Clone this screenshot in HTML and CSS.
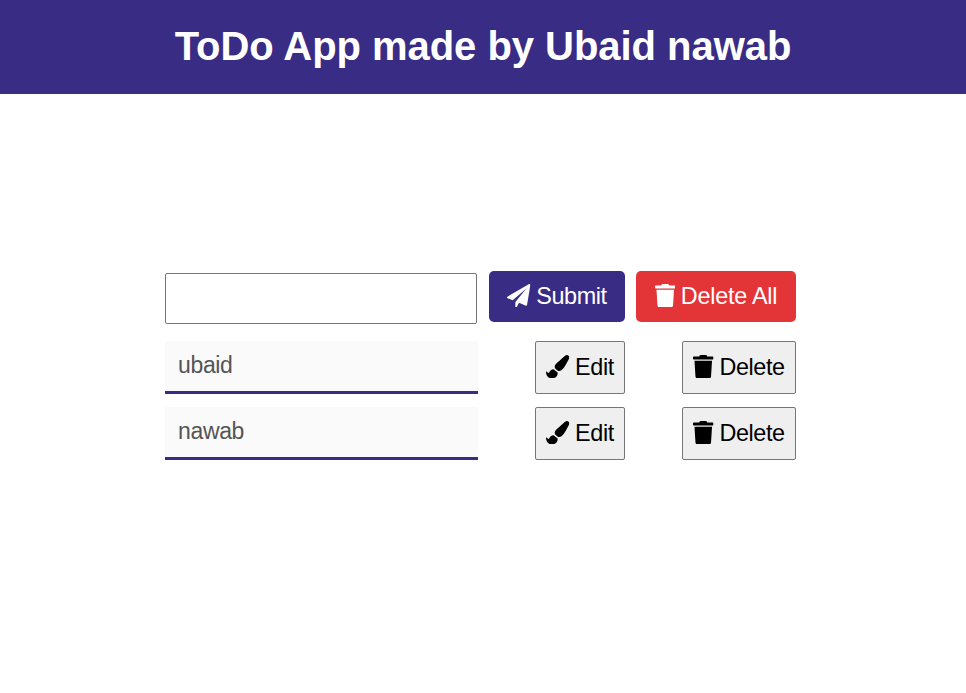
FILE: index.html
```html
<!DOCTYPE html>
<html lang="en">
<head>
<meta charset="utf-8">
<title>ToDo App</title>
<link rel="stylesheet" href="styles.css">
</head>
<body>
<svg class="sprite" aria-hidden="true">
  <symbol id="trash" viewBox="0 0 448 512"><path d="M432 32H312l-9.400-18.700A24 24 0 0 0 281.100 0H166.800a23.720 23.720 0 0 0-21.400 13.300L136 32H16A16 16 0 0 0 0 48v32a16 16 0 0 0 16 16h416a16 16 0 0 0 16-16V48a16 16 0 0 0-16-16zM53.200 467a48 48 0 0 0 47.900 45h245.800a48 48 0 0 0 47.900-45L416 128H32z"/></symbol>
  <symbol id="plane" viewBox="0 0 1792 1792"><path d="M1764 11q33 24 27 64l-256 1536q-5 29-32 45-14 8-31 8-11 0-24-5l-527-216-168 316q-18 33-49 33-13 0-22-4-19-7-30.500-23.500t-11.500-36.500v-349l864-1059-1069 925-395-162q-37-14-40-55-2-40 32-59l1664-960q15-9 32-9 20 0 36 11z"/></symbol>
  <symbol id="brush" viewBox="0 0 512 512"><path d="M167.020 309.340c-40.120 2.580-76.530 17.860-97.190 72.300-2.350 6.210-8 9.980-14.590 9.980-11.110 0-45.460-27.670-55.250-34.350C0 439.620 37.930 512 128 512c75.860 0 128-43.770 128-120.190 0-3.110-.65-6.080-.97-9.130l-88.010-73.340zM457.890 0c-15.160 0-29.370 6.710-40.210 16.450C213.270 199.050 192 203.340 192 257.090c0 13.700 3.250 26.760 8.730 38.700l63.820 53.180c7.210 1.800 14.640 3.030 22.390 3.030 62.110 0 98.110-45.470 211.160-256.460 7.380-14.350 13.900-29.850 13.900-45.990C512 20.640 486 0 457.890 0z"/></symbol>
</svg>
<header class="header"><h1 class="title">ToDo App made by Ubaid nawab</h1></header>
<main class="todo">
  <div class="form">
    <input class="entry" type="text" aria-label="Todo">
    <button class="btn submit"><svg class="icon"><use href="#plane"/></svg>Submit</button>
    <button class="btn clear"><svg class="icon narrow"><use href="#trash"/></svg>Delete All</button>
  </div>
  <ul class="list">
    <li class="item">
      <span class="text">ubaid</span>
      <button class="btn edit"><svg class="icon"><use href="#brush"/></svg>Edit</button>
      <button class="btn delete"><svg class="icon narrow"><use href="#trash"/></svg>Delete</button>
    </li>
    <li class="item">
      <span class="text">nawab</span>
      <button class="btn edit"><svg class="icon"><use href="#brush"/></svg>Edit</button>
      <button class="btn delete"><svg class="icon narrow"><use href="#trash"/></svg>Delete</button>
    </li>
  </ul>
</main>
</body>
</html>
```
FILE: styles.css
```css
* { box-sizing: border-box; }
body {
  margin: 0;
  background: #fff;
  font-family: "Liberation Sans", Arial, sans-serif;
}
.sprite { display: none; }
.header {
  height: 94px;
  display: flex;
  align-items: center;
  justify-content: center;
  padding-bottom: 2px;
  background: #392c85;
}
.title {
  margin: 0;
  color: #fff;
  font-size: 40px;
  letter-spacing: -0.040px;
  line-height: 46px;
  white-space: nowrap;
}
.todo {
  width: 631px;
  margin: 177px 0 0 165px;
}
.form {
  display: flex;
  align-items: flex-start;
}
.entry {
  width: 312px;
  height: 51px;
  margin: 2px 12px 0 0;
  border: 1px solid #767676;
  border-radius: 2px;
  font-size: 23px;
}
.btn {
  display: flex;
  align-items: center;
  justify-content: center;
  gap: 5.500px;
  padding: 0;
  font: 23.400px/27px "Liberation Sans", Arial, sans-serif;
  letter-spacing: -0.400px;
  white-space: nowrap;
}
.icon {
  width: 23.400px;
  height: 23.400px;
  margin-bottom: 2px;
  flex: none;
  fill: currentColor;
}
.narrow { width: 20.500px; }
.submit, .clear {
  height: 51px;
  border: 0;
  border-radius: 5px;
  color: #fff;
}
.submit { width: 136px; margin-right: 11px; background: #392c85; }
.clear { width: 160px; background: #e33437; letter-spacing: -0.250px; }
.list {
  display: grid;
  gap: 13px;
  margin: 17px 0 0;
  padding: 0;
  list-style: none;
}
.item {
  display: grid;
  grid-template-columns: 313px 90px 114px;
  column-gap: 57px;
  height: 53px;
}
.text {
  padding: 11px 13px;
  border-bottom: 3px solid #392c85;
  background: #fafafa;
  color: #555;
  font-size: 23px;
  letter-spacing: -0.350px;
  line-height: 27px;
}
.edit, .delete {
  border: 1px solid #767676;
  border-radius: 2px;
  background: #efefef;
  color: #000;
}
```
